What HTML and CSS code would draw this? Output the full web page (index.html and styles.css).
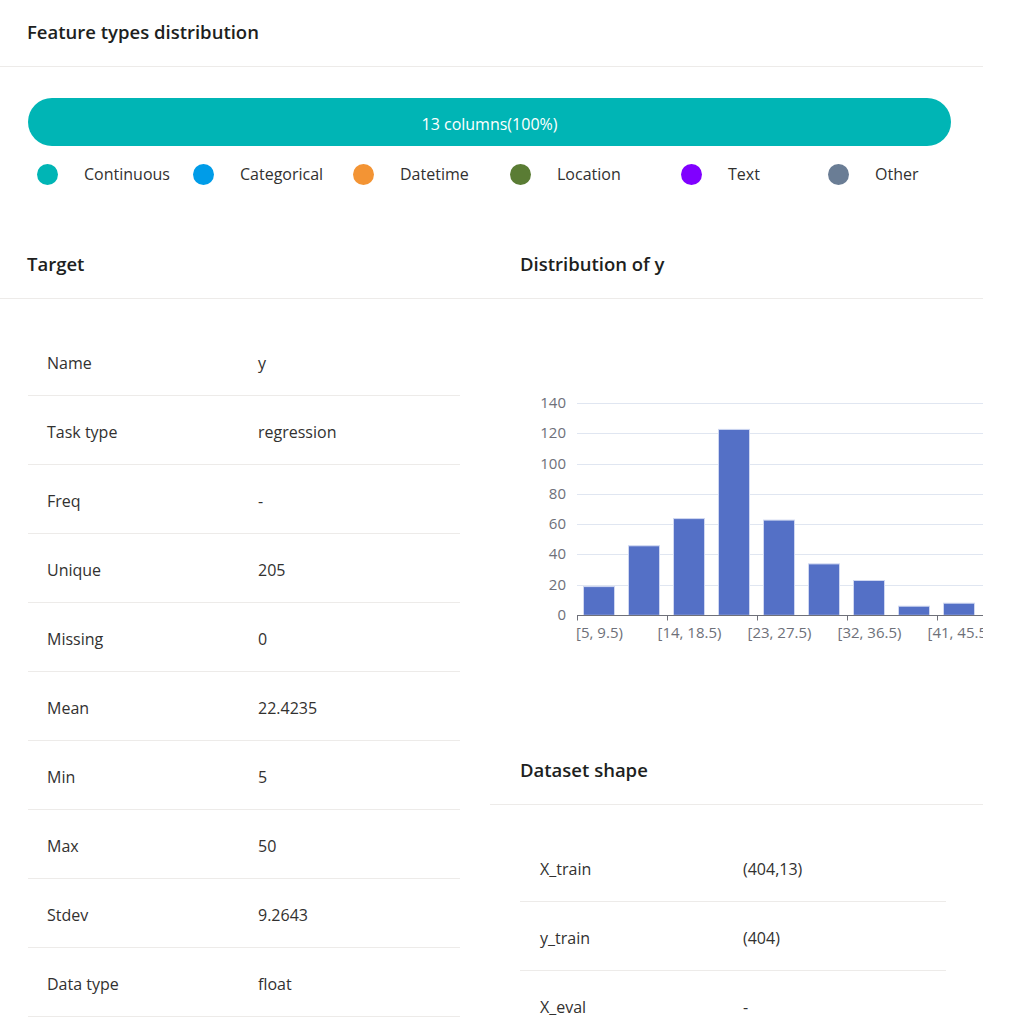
FILE: index.html
```html
<!DOCTYPE html>
<html lang="en">
<head>
<meta charset="utf-8">
<title>Feature types distribution</title>
<link rel="stylesheet" href="styles.css">
</head>
<body>
<main class="page">
  <section class="card">
    <header class="card-head">Feature types distribution</header>
    <div class="types">
      <div class="types-bar">13 columns(100%)</div>
      <ul class="legend">
        <li class="legend-item"><span class="dot dot-cont"></span>Continuous</li>
        <li class="legend-item"><span class="dot dot-cat"></span>Categorical</li>
        <li class="legend-item"><span class="dot dot-date"></span>Datetime</li>
        <li class="legend-item"><span class="dot dot-loc"></span>Location</li>
        <li class="legend-item"><span class="dot dot-text"></span>Text</li>
        <li class="legend-item"><span class="dot dot-other"></span>Other</li>
      </ul>
    </div>
  </section>

  <div class="columns">
    <section class="col col-left">
      <header class="card-head">Target</header>
      <div class="table table-left">
        <div class="row"><span class="k">Name</span><span class="v">y</span></div>
        <div class="row"><span class="k">Task type</span><span class="v">regression</span></div>
        <div class="row"><span class="k">Freq</span><span class="v">-</span></div>
        <div class="row"><span class="k">Unique</span><span class="v">205</span></div>
        <div class="row"><span class="k">Missing</span><span class="v">0</span></div>
        <div class="row"><span class="k">Mean</span><span class="v">22.4235</span></div>
        <div class="row"><span class="k">Min</span><span class="v">5</span></div>
        <div class="row"><span class="k">Max</span><span class="v">50</span></div>
        <div class="row"><span class="k">Stdev</span><span class="v">9.2643</span></div>
        <div class="row"><span class="k">Data type</span><span class="v">float</span></div>
      </div>
    </section>

    <section class="col col-right">
      <header class="card-head">Distribution of y</header>
      <div class="chart">
        <svg class="chart-svg" width="493" height="439" viewBox="0 0 493 439">
          <g class="grid">
            <line x1="87" x2="493" y1="104.5" y2="104.5"/>
            <line x1="87" x2="493" y1="134.5" y2="134.5"/>
            <line x1="87" x2="493" y1="165.5" y2="165.5"/>
            <line x1="87" x2="493" y1="195.5" y2="195.5"/>
            <line x1="87" x2="493" y1="225.5" y2="225.5"/>
            <line x1="87" x2="493" y1="255.5" y2="255.5"/>
            <line x1="87" x2="493" y1="286.5" y2="286.5"/>
          </g>
          <g class="ylabels">
            <text x="76" y="103">140</text>
            <text x="76" y="133.2">120</text>
            <text x="76" y="163.5">100</text>
            <text x="76" y="193.7">80</text>
            <text x="76" y="224">60</text>
            <text x="76" y="254.2">40</text>
            <text x="76" y="284.5">20</text>
            <text x="76" y="314.8">0</text>
          </g>
          <g class="bars">
            <rect x="93.5" y="287.6" width="31" height="28.7"/>
            <rect x="138.5" y="246.8" width="31" height="69.5"/>
            <rect x="183.5" y="219.6" width="31" height="96.7"/>
            <rect x="228.5" y="130.4" width="31" height="185.9"/>
            <rect x="273.5" y="221.1" width="31" height="95.2"/>
            <rect x="318.5" y="264.9" width="31" height="51.4"/>
            <rect x="363.5" y="281.5" width="31" height="34.8"/>
            <rect x="408.5" y="307.2" width="31" height="9.1"/>
            <rect x="453.5" y="304.2" width="31" height="12.1"/>
          </g>
          <g class="axis">
            <line x1="87" x2="493" y1="316.5" y2="316.5"/>
            <line x1="87.5" x2="87.5" y1="316.5" y2="321.5"/>
            <line x1="177.5" x2="177.5" y1="316.5" y2="321.5"/>
            <line x1="267.5" x2="267.5" y1="316.5" y2="321.5"/>
            <line x1="357.5" x2="357.5" y1="316.5" y2="321.5"/>
            <line x1="447.5" x2="447.5" y1="316.5" y2="321.5"/>
          </g>
          <g class="xlabels">
            <text x="109.5" y="333">[5, 9.5)</text>
            <text x="199.5" y="333">[14, 18.5)</text>
            <text x="289.5" y="333">[23, 27.5)</text>
            <text x="379.5" y="333">[32, 36.5)</text>
            <text x="469.5" y="333">[41, 45.5)</text>
          </g>
        </svg>
      </div>
      <header class="card-head">Dataset shape</header>
      <div class="table table-right">
        <div class="row"><span class="k">X_train</span><span class="v">(404,13)</span></div>
        <div class="row"><span class="k">y_train</span><span class="v">(404)</span></div>
        <div class="row"><span class="k">X_eval</span><span class="v">-</span></div>
      </div>
    </section>
  </div>
</main>
</body>
</html>
```
FILE: styles.css
```css
* { box-sizing: border-box; }

html, body {
  margin: 0;
  padding: 0;
  background: #ffffff;
}

body {
  font-family: "Open Sans", "Noto Sans", "Liberation Sans", sans-serif;
  font-size: 16px;
  color: #323130;
  overflow: hidden;
}

.page {
  width: 983px;
}

.card-head {
  padding: 20px 27px 22px;
  line-height: 24px;
  font-size: 18.5px;
  font-weight: 600;
  color: #201f1e;
  border-bottom: 1px solid #edebe9;
}

.types {
  padding: 31px 32px 0 28px;
}

.types-bar {
  height: 48px;
  border-radius: 24px;
  background: #00b5b5;
  color: #ffffff;
  font-size: 16px;
  line-height: 52px;
  text-align: center;
  overflow: hidden;
}

.legend {
  list-style: none;
  margin: 18px 0 0;
  padding: 0 0 0 9px;
  display: grid;
  grid-template-columns: 156px 160px 157px 171px 147px auto;
}

.legend-item {
  display: flex;
  align-items: center;
  gap: 26px;
  height: 20px;
  line-height: 18px;
  color: #323130;
}

.dot {
  width: 21px;
  height: 21px;
  border-radius: 50%;
  flex: none;
}

.dot-cont { background: #00b5b5; }
.dot-cat { background: #009ce8; }
.dot-date { background: #f39434; }
.dot-loc { background: #5a7c34; }
.dot-text { background: #8000ff; }
.dot-other { background: #6a7d95; }

.columns {
  margin-top: 48px;
  display: grid;
  grid-template-columns: 490px 493px;
}

.col-right .card-head {
  padding-left: 30px;
}

.table {
  margin-top: 28px;
}

.table-left {
  margin-left: 28px;
  margin-right: 30px;
}

.table-right {
  margin-left: 30px;
  margin-right: 37px;
}

.row {
  display: grid;
  padding: 26px 0 22px;
  line-height: 20px;
  border-bottom: 1px solid #edebe9;
}

.table-left .row {
  grid-template-columns: 230px 1fr;
}

.table-right .row {
  grid-template-columns: 223px 1fr;
}

.k {
  padding-left: 19px;
}

.table-right .k {
  padding-left: 20px;
}

.chart {
  height: 439px;
  overflow: hidden;
}

.chart-svg {
  display: block;
  font-family: "Open Sans", "Noto Sans", sans-serif;
  font-size: 15px;
}

.grid line {
  stroke: #e0e6f1;
  stroke-width: 1;
}

.axis line {
  stroke: #6e7079;
  stroke-width: 1;
}

.bars rect {
  fill: #5470c6;
  stroke: #cfd7f1;
  stroke-width: 1;
}

.ylabels text {
  fill: #6e7079;
  text-anchor: end;
  dominant-baseline: central;
}

.xlabels text {
  fill: #6e7079;
  text-anchor: middle;
  dominant-baseline: central;
}
```
